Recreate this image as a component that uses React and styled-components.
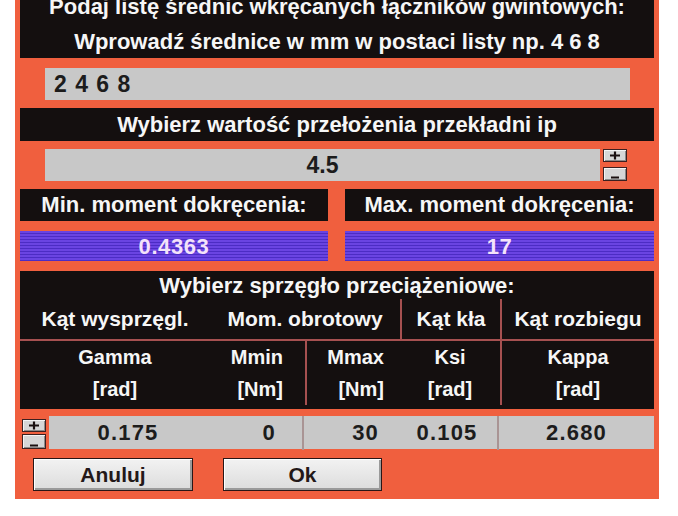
import React from "react";
import styled, { createGlobalStyle } from "styled-components";

const GlobalStyle = createGlobalStyle`
  html, body {
    margin: 0;
    padding: 0;
    background: #fff;
  }
  body {
    font-family: "Liberation Sans", Arial, sans-serif;
    overflow: hidden;
  }
`;

const ORANGE = "#f05f3e";
const BLACK = "#140f0f";
const GRAY = "#c8c8c8";
const SEP = "#a65050";

const Panel = styled.div`
  width: 644px;
  margin: -13px 0 0 15px;
  padding: 0 5px 8px;
  box-sizing: border-box;
  background: ${ORANGE};
  display: flex;
  flex-direction: column;
  font-weight: bold;
  font-size: 22px;
`;

const HeaderBar = styled.div`
  background: ${BLACK};
  color: #f6f6f6;
  text-align: center;
  padding: 5px 0 1px;
  display: flex;
  flex-direction: column;
  gap: 5px;

  & > div {
    line-height: 30px;
  }
`;

const TitleBar = styled.div`
  margin-top: ${p => p.$top || 8}px;
  height: 33px;
  line-height: 33px;
  background: ${BLACK};
  color: #f6f6f6;
  text-align: center;
`;

const Field = styled.div`
  margin: ${p => p.$top || 10}px 24px 0 25px;
  height: 32px;
  line-height: 33px;
  background: ${GRAY};
  color: #1c1c1c;
  padding-left: 9px;
  letter-spacing: 1px;
  font-size: 23px;
`;

const SpinRow = styled.div`
  margin: 8px 27px 0 25px;
  height: 32px;
  display: flex;
  gap: 3px;
`;

const SpinValue = styled.div`
  flex: 1;
  background: ${GRAY};
  color: #1c1c1c;
  line-height: 33px;
  font-size: 23px;
  text-align: center;
`;

const SpinCol = styled.div`
  width: 24px;
  display: flex;
  flex-direction: column;
  justify-content: space-between;
  padding: ${p => p.$pad || "0"};
`;

const SpinBtn = styled.button`
  width: 24px;
  height: ${p => p.$h || 13}px;
  padding: 0;
  border: 1px solid #3c2020;
  background: #d6d6d6;
  box-shadow: inset 1px 1px #f4f4f4, inset -1px -1px #8a8a8a;
  display: flex;
  align-items: ${p => (p.$low ? "flex-end" : "center")};
  justify-content: center;
  cursor: pointer;
`;

const Pair = styled.div`
  margin-top: ${p => p.$top}px;
  display: grid;
  grid-template-columns: 308px 309px;
  column-gap: 17px;
`;

const Label = styled.div`
  height: 32px;
  line-height: 32px;
  background: ${BLACK};
  color: #f6f6f6;
  text-align: center;
`;

const Result = styled.div`
  height: 30px;
  line-height: 31px;
  text-align: center;
  color: #f4e2fa;
  font-size: 22px;
  letter-spacing: 0.6px;
  background: repeating-linear-gradient(
    180deg,
    #6a44e2 0px,
    #6a44e2 2px,
    #4c2cc4 2px,
    #4c2cc4 3px
  );
`;

const Table = styled.div`
  margin-top: 10px;
  background: ${BLACK};
  color: #f6f6f6;
  padding-bottom: 4px;
`;

const TableTitle = styled.div`
  height: 28px;
  line-height: 30px;
  text-align: center;
`;

const Cols = styled.div`
  display: grid;
  grid-template-columns: 190px 95px 95px 100px 1fr;
`;

const GroupCell = styled.div`
  grid-column: ${p => p.$span || "auto"};
  height: 40px;
  line-height: 40px;
  font-size: 21px;
  text-align: center;
  white-space: nowrap;
  border-left: ${p => (p.$sep ? `2px solid ${SEP}` : "none")};
`;

const Rule = styled.div`
  height: 2px;
  background: ${SEP};
`;

const HeadCell = styled.div`
  display: flex;
  flex-direction: column;
  align-items: ${p => (p.$right ? "flex-end" : "center")};
  padding-right: ${p => p.$pr || 0}px;
  line-height: 32px;
  font-size: 20px;
  border-left: ${p => (p.$sep ? `2px solid ${SEP}` : "none")};
`;

const DataRow = styled.div`
  margin-top: 7px;
  height: 33px;
  display: flex;
  gap: 3px;
  padding-left: 2px;
`;

const DataCols = styled.div`
  flex: 1;
  display: grid;
  grid-template-columns: 158px 95px 95px 100px 1fr;
  background: ${GRAY};
  color: #1c1c1c;
  font-size: 22px;
  line-height: 34px;
`;

const DataCell = styled.div`
  text-align: ${p => (p.$right ? "right" : "center")};
  padding-right: ${p => p.$pr || 0}px;
  letter-spacing: 1.2px;
  border-left: ${p => (p.$sep ? "2px solid #a99494" : "none")};
`;

const Buttons = styled.div`
  margin-top: 9px;
  padding-left: 13px;
  display: flex;
  gap: 30px;
`;

const Button = styled.button`
  width: ${p => p.$w || 160}px;
  height: 33px;
  border: 1px solid #2a1616;
  background: linear-gradient(180deg, #f2f2f2, #dcdcdc);
  box-shadow: inset 1px 1px #ffffff, inset -2px -2px #9a9a9a;
  font-family: "Liberation Sans", Arial, sans-serif;
  font-weight: bold;
  font-size: 21px;
  color: #231818;
  padding: 0;
  cursor: pointer;
`;

const Plus = () => (
  <svg width="12" height="9" viewBox="0 0 12 9">
    <path d="M1 4.5H11M6 0.5V8.5" stroke="#1a1010" strokeWidth="2.2" />
  </svg>
);

const Minus = () => (
  <svg width="12" height="5" viewBox="0 0 12 5">
    <path d="M2 2.5H10" stroke="#1a1010" strokeWidth="2" />
  </svg>
);

const Spinner = ({ pad, plusH, minusH }) => (
  <SpinCol $pad={pad}>
    <SpinBtn $h={plusH} aria-label="plus">
      <Plus />
    </SpinBtn>
    <SpinBtn $h={minusH} $low aria-label="minus">
      <Minus />
    </SpinBtn>
  </SpinCol>
);

export default function App() {
  return (
    <>
      <GlobalStyle />
      <Panel>
        <HeaderBar>
          <div>Podaj listę średnic wkręcanych łączników gwintowych:</div>
          <div>Wprowadź średnice w mm w postaci listy np. 4 6 8</div>
        </HeaderBar>

        <Field>2 4 6 8</Field>

        <TitleBar>Wybierz wartość przełożenia przekładni ip</TitleBar>

        <SpinRow>
          <SpinValue>4.5</SpinValue>
          <Spinner plusH={13} minusH={14} />
        </SpinRow>

        <Pair $top={8}>
          <Label>Min. moment dokręcenia:</Label>
          <Label>Max. moment dokręcenia:</Label>
        </Pair>

        <Pair $top={10}>
          <Result>0.4363</Result>
          <Result>17</Result>
        </Pair>

        <Table>
          <TableTitle>Wybierz sprzęgło przeciążeniowe:</TableTitle>
          <Cols>
            <GroupCell>Kąt wysprzęgl.</GroupCell>
            <GroupCell $span="span 2">Mom. obrotowy</GroupCell>
            <GroupCell $sep>Kąt kła</GroupCell>
            <GroupCell $sep>Kąt rozbiegu</GroupCell>
          </Cols>
          <Rule />
          <Cols>
            <HeadCell>
              <span>Gamma</span>
              <span>[rad]</span>
            </HeadCell>
            <HeadCell $right $pr={22}>
              <span>Mmin</span>
              <span>[Nm]</span>
            </HeadCell>
            <HeadCell $right $sep $pr={16}>
              <span>Mmax</span>
              <span>[Nm]</span>
            </HeadCell>
            <HeadCell>
              <span>Ksi</span>
              <span>[rad]</span>
            </HeadCell>
            <HeadCell $sep>
              <span>Kappa</span>
              <span>[rad]</span>
            </HeadCell>
          </Cols>
        </Table>

        <DataRow>
          <Spinner pad="3px 0 0" plusH={13} minusH={15} />
          <DataCols>
            <DataCell>0.175</DataCell>
            <DataCell $right $pr={26}>0</DataCell>
            <DataCell $right $sep $pr={18}>30</DataCell>
            <DataCell>0.105</DataCell>
            <DataCell $sep>2.680</DataCell>
          </DataCols>
        </DataRow>

        <Buttons>
          <Button>Anuluj</Button>
          <Button $w={159}>Ok</Button>
        </Buttons>
      </Panel>
    </>
  );
}
